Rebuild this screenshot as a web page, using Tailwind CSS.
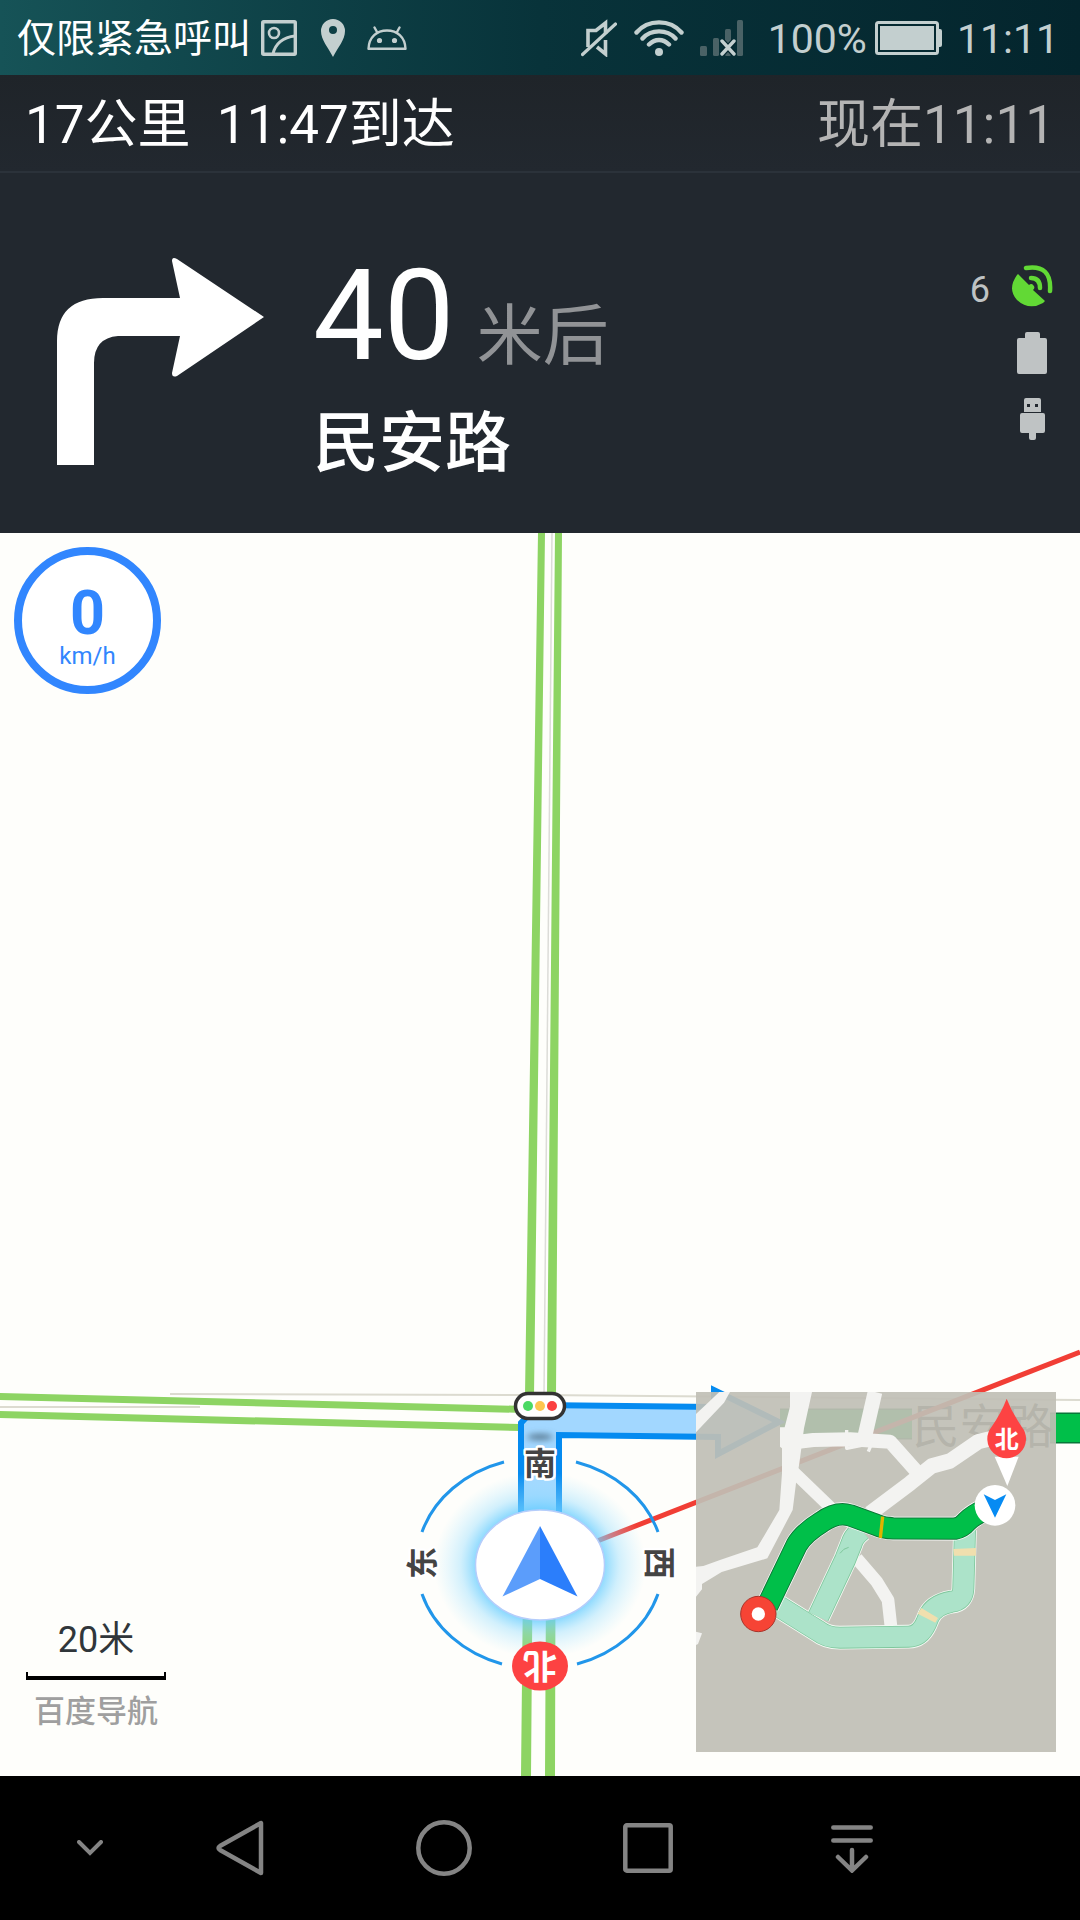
<!DOCTYPE html>
<html lang="zh-CN">
<head>
<meta charset="utf-8">
<meta name="viewport" content="width=device-width, initial-scale=1">
<title>导航</title>
<script src="https://cdn.jsdelivr.net/npm/@tailwindcss/browser@4"></script>
</head>
<body class="flex min-h-screen flex-col bg-black font-['Roboto','Noto_Sans_CJK_SC',sans-serif]">

<!-- System status bar -->
<div class="flex h-[75px] shrink-0 items-center justify-between bg-linear-to-r from-[#165357] via-[#08333a] to-[#04252d] pr-[21px] pl-[17px] text-[#c3cfcf]">
  <div class="flex items-center">
    <span class="pt-1 text-[39px] leading-none text-white">仅限紧急呼叫</span>
    <svg class="ml-2.5 h-9 w-9" viewBox="0 0 36 36" fill="none" stroke="currentColor" stroke-width="3.4" aria-hidden="true"><rect x="1.7" y="1.7" width="32.6" height="32.6" rx="1"/><circle cx="13" cy="13" r="5" stroke-width="2.6"/><path d="M12 34C14 24 22 17 34 16" stroke-width="3"/></svg>
    <svg class="ml-6 h-[38px] w-6" viewBox="0 0 24 38" fill="currentColor" aria-hidden="true"><path fill-rule="evenodd" d="M12 0a12 12 0 0 1 12 12c0 9-7 16-12 26C7 28 0 21 0 12A12 12 0 0 1 12 0zm0 7a4 4 0 1 0 0 8 4 4 0 0 0 0-8z"/></svg>
    <svg class="ml-[22px] h-6 w-10" viewBox="0 0 40 24" fill="none" stroke="currentColor" stroke-width="2.4" stroke-linecap="round" stroke-linejoin="round" aria-hidden="true"><path d="M1.5 22.8C2 11 10 4.5 20 4.5S38 11 38.5 22.8z"/><path d="M10 6L7.5 1.5M30 6l2.500-4.500"/><circle cx="12.500" cy="14.500" r="1.400" fill="currentColor"/><circle cx="27.500" cy="14.500" r="1.400" fill="currentColor"/></svg>
  </div>
  <div class="flex items-center">
    <svg class="h-[38px] w-9" viewBox="0 0 36 38" fill="none" stroke="currentColor" stroke-width="3.600" aria-hidden="true"><path d="M7 28V11.500h8L24.500 4V15M16 28l8.500 7V21"/><path d="M1.500 35.500L34.500 5" stroke-width="3.200" stroke-linecap="round"/></svg>
    <svg class="ml-[17px] h-9 w-[50px]" viewBox="0 0 50 36" fill="none" stroke="currentColor" stroke-width="4.400" stroke-linecap="round" aria-hidden="true"><path d="M2.500 12.500C14-1 36-1 47.500 12.500M8.500 18.500C17 9 33 9 41.500 18.500M15 24.500c6-6 14-6 20 0"/><circle cx="25" cy="32" r="4" fill="currentColor" stroke="none"/></svg>
    <svg class="ml-4 h-9 w-11" viewBox="0 0 44 36" aria-hidden="true"><g fill="#4a6266"><rect y="26" width="7" height="10" rx="1.500"/><rect x="13" y="18" width="6" height="18" rx="1.500"/><rect x="25" y="9" width="6" height="27" rx="1.500"/><rect x="37" width="6" height="36" rx="1.500"/></g><path d="M22 21l12 13M34 21L22 34" stroke="#04252d" stroke-width="6"/><path d="M22 21l12 13M34 21L22 34" stroke="currentColor" stroke-width="3.400" stroke-linecap="round"/></svg>
    <span class="ml-6 pt-1 text-[41px] leading-none">100%</span>
    <svg class="ml-2 h-[34px] w-[68px]" viewBox="0 0 68 34" aria-hidden="true"><rect x="1.500" y="1.500" width="61" height="31" rx="2" fill="none" stroke="currentColor" stroke-width="3"/><rect x="5" y="5" width="54" height="24" fill="currentColor"/><path d="M63 8h2q2 0 2 2v14q0 2-2 2h-2z" fill="currentColor"/></svg>
    <span class="ml-[14px] pt-1 text-[41px] leading-none">11:11</span>
  </div>
</div>

<!-- Trip summary -->
<header class="shrink-0 bg-[#22282f]">
  <div class="flex h-[98px] items-center justify-between border-b-2 border-[#2b323a] bg-linear-to-b from-[#1f2429] to-[#22282f] px-[25px] pt-1 text-[53px] leading-none">
    <p class="whitespace-pre text-white">17公里  11:47到达</p>
    <p class="text-[#b4b4b4]">现在11:11</p>
  </div>

  <!-- Next manoeuvre -->
  <div class="flex h-[360px] justify-between pr-[26px] pl-14">
    <div class="flex">
      <svg class="mt-[84px] h-[209px] w-[209px]" viewBox="0 0 209 209" fill="#fff" role="img" aria-label="右转"><path d="M1 208V84Q1 41 47 41H124L116 4Q116-1 121 2L208 60L121 119Q116 121 116 116L124 79H62Q38 81 38 106V208z"/></svg>
      <div class="ml-12 pt-20 text-white">
        <p class="flex items-baseline gap-[22px] leading-[126px]"><span class="text-[126px]">40</span><span class="text-[66px] text-[#919396]">米后</span></p>
        <p class="mt-1 text-[66px] leading-[80px] font-medium">民安路</p>
      </div>
    </div>
    <div class="flex flex-col items-end pt-[91px] text-[#bfc3c4]">
      <div class="flex items-center gap-5">
        <span class="pt-2 text-[36px] leading-[36px]">6</span>
        <svg class="h-[44px] w-[44px]" viewBox="0 0 44 44" fill="none" stroke="#62d935" stroke-linecap="round" aria-label="卫星信号" role="img"><path d="M7 11Q-3 25 7 36Q19 47 33 39L35 37L23 26A3 3 0 1 0 19 21L8 10z" fill="#62d935" stroke="none"/><path d="M21 14Q30 14 30 24" stroke-width="4.500"/><path d="M16 4Q42 0 40 27" stroke-width="4.500"/></svg>
      </div>
      <svg class="mt-6 mr-[6px] h-[42px] w-[31px]" viewBox="0 0 31 42" fill="currentColor" aria-label="电池" role="img"><path d="M8 6V2q0-2 2-2h11q2 0 2 2v4h5q2 0 2 2v32q0 2-2 2H2q-2 0-2-2V8q0-2 2-2z"/></svg>
      <svg class="mt-6 mr-2 h-[42px] w-[26px]" viewBox="0 0 26 42" fill="currentColor" aria-label="USB" role="img"><path fill-rule="evenodd" d="M4 14V2q0-2 2-2h13q2 0 2 2v12zM7 6v3h3V6zm8 0v3h3V6z"/><path d="M2 15h21q2 0 2 2v16q0 2-2 2h-7v5q0 2-2 2h-3q-2 0-2-2v-5H2q-2 0-2-2V17q0-2 2-2z"/></svg>
    </div>
  </div>
</header>

<!-- Map -->
<main class="relative flex min-h-[900px] flex-1 flex-col justify-between overflow-hidden bg-[#fefefb]">
  <svg class="absolute inset-0 h-full w-full" viewBox="0 533 1080 1243" preserveAspectRatio="xMidYMax slice" role="img" aria-label="地图">
    <defs>
      <radialGradient id="glow"><stop offset=".55" stop-color="#5cc9ff" stop-opacity=".9"/><stop offset=".75" stop-color="#8fdbff" stop-opacity=".4"/><stop offset="1" stop-color="#b0e8ff" stop-opacity="0"/></radialGradient>
      <filter id="soft" x="-50%" y="-200%" width="200%" height="500%"><feGaussianBlur stdDeviation="3"/></filter>
    </defs>
    <!-- side roads -->
    <path d="M170 1394L540 1395L1080 1400" fill="none" stroke="#dcdbd0" stroke-width="2"/>
    <path d="M0 1407H200" stroke="#dcdbd0" stroke-width="2"/>
    <path d="M552 533L544 1395" stroke="#dcdcd8" stroke-width="1.500"/>
    <g fill="#8dd463">
      <path d="M538 533H545L534 1395L531 1776H521L525 1395z"/>
      <path d="M555 533H562L556 1395L555 1776H545L547 1395z"/>
      <path d="M0 1393L525 1406V1413L0 1400z"/>
      <path d="M0 1411L520 1424V1431L0 1418z"/>
    </g>
    <!-- route ahead -->
    <path d="M780 1424H912M1050 1428H1080" stroke="#08783a" stroke-width="31"/>
    <path d="M780 1424H912M1050 1428H1080" stroke="#00bf49" stroke-width="28"/>
    <path d="M521 1565V1423L538 1405L714 1407V1390L779 1422L718 1454V1437L559 1435V1565z" fill="#a2d7ff" stroke="#058bf0" stroke-width="6"/>
    <ellipse cx="540" cy="1437" rx="13" ry="3" fill="#55758c" filter="url(#soft)"/>
    <text x="983" y="1443" text-anchor="middle" font-size="47" fill="#333">民安路</text>
    <path d="M541 1563L1080 1352" stroke="#f13e35" stroke-width="5"/>
    <!-- traffic light -->
    <rect x="515.500" y="1393.500" width="49" height="25" rx="12.500" fill="#fff" stroke="#333" stroke-width="3.500"/>
    <circle cx="528" cy="1406" r="5" fill="#4bd964"/><circle cx="540" cy="1406" r="5" fill="#fec64f"/><circle cx="552" cy="1406" r="5" fill="#fb4141"/>
    <!-- compass -->
    <ellipse cx="540" cy="1565" rx="106" ry="93" fill="url(#glow)"/>
    <g fill="none" stroke="#2196ea" stroke-width="3">
      <path d="M422 1532A123.400 105.600 0 0 1 504 1462"/>
      <path d="M576 1462A123.400 105.600 0 0 1 658 1532"/>
      <path d="M422 1594A123.400 105.600 0 0 0 502 1664"/>
      <path d="M658 1594A123.400 105.600 0 0 1 577 1664"/>
    </g>
    <ellipse cx="540" cy="1565" rx="64.500" ry="55" fill="#fff" stroke="#b5cdfb" stroke-width="1.500"/>
    <path d="M540 1526V1579L502.500 1596.500z" fill="#5b9dfb"/><path d="M540 1526V1579L577.500 1596.500z" fill="#2b7efb"/>
    <ellipse cx="540" cy="1666" rx="28" ry="24.500" fill="#fd4242"/>
    <g text-anchor="middle" font-size="32" font-weight="700" fill="#444" stroke="#fff" stroke-width="5" stroke-linejoin="round" paint-order="stroke">
      <text x="540" y="1475">南</text>
      <text transform="translate(434 1563) rotate(-90)">东</text>
      <text transform="translate(648 1563) rotate(90)">西</text>
    </g>
    <text transform="translate(540 1654) rotate(180)" text-anchor="middle" font-size="34" font-weight="700" fill="#fff">北</text>
  </svg>

  <!-- Current speed -->
  <div class="relative mt-[14px] ml-[14px] flex size-[147px] flex-col items-center rounded-full border-8 border-[#3186fe] bg-white pt-[27px] text-[#3186fe]">
    <span class="text-[61px] leading-[62px] font-bold">0</span>
    <span class="text-[24px] leading-[24px]">km/h</span>
  </div>

  <div class="relative flex items-end justify-between pr-6 pb-6 pl-[26px]">
    <!-- Scale -->
    <div class="mb-[22px] flex w-[140px] flex-col items-center">
      <span class="text-[36px] leading-[44px] text-[#30363a]">20米</span>
      <div class="mt-[10px] h-2 w-full border-x-2 border-b-4 border-black"></div>
      <span class="mt-[14px] text-[31px] leading-[36px] font-medium text-[#9f9f9f]">百度导航</span>
    </div>

    <!-- Route overview -->
    <svg class="size-[360px]" viewBox="48 156 1080 1080" role="img" aria-label="路线全览">
      <path d="M48 156H1128V1236H48z" fill="#c0bfb5" fill-opacity=".92"/>
      <g fill="#f3f3f1">
        <path d="M48 222L118 156H150L132 188L48 277z"/>
        <path d="M330 156H396L372 265L358 370L348 430L338 510L262 655L125 696L66 732V748L48 770V680L70 678L120 660L232 622L298 510L306 400L306 325L300 320V262H314L330 200z"/>
        <path d="M48 875L66 880L54 912L48 915z"/>
      </g>
      <g fill="none" stroke="#f3f3f1" stroke-linejoin="round">
        <path d="M350 306L400 300L510 298L630 305L715 400" stroke-width="42"/>
        <path d="M585 156L552 300" stroke-width="44"/>
        <path d="M500 270L500 325L575 310L565 335" stroke-width="10"/>
        <path d="M340 395L470 520" stroke-width="36"/>
        <path d="M935 295L895 305L810 363L755 378L690 430L570 520" stroke-width="46"/>
        <path d="M530 655L590 725L624 780L634 870" stroke-width="38"/>
      </g>
      <g fill="none" stroke-linejoin="round">
        <g stroke="#f4faf5" stroke-width="71"><path id="alt" d="M290 795L415 873Q440 893 480 893L685 890Q720 890 738 850L745 833Q760 795 815 785Q848 782 850 745L855 570"/><path id="link" d="M415 830L495 660L515 610Q520 590 545 570"/></g>
        <g stroke="#7fc79c" stroke-width="66"><use href="#alt"/><use href="#link"/></g>
        <g stroke="#ace3c9" stroke-width="61"><use href="#alt"/><use href="#link"/></g>
      </g>
      <path d="M480 640Q490 625 506 622" fill="none" stroke="#7fc79c" stroke-width="3"/>
      <path d="M820 627L888 624V647H822zM724 804L774 834L766 848L713 821z" fill="#f0dfae"/>
      <g fill="none" stroke-linejoin="round">
        <path d="M262 798L350 615Q370 580 425 546Q470 514 510 526L590 555Q610 564 640 565L825 566Q845 563 860 545Q880 525 910 512" stroke="#fff" stroke-width="71"/>
        <path d="M262 798L350 615Q370 580 425 546Q470 514 510 526L590 555Q610 564 640 565L825 566Q845 563 860 545Q880 525 910 512" stroke="#0f7838" stroke-width="67"/>
        <path d="M262 798L350 615Q370 580 425 546Q470 514 510 526L590 555Q610 564 640 565L825 566Q845 563 860 545Q880 525 910 512" stroke="#00bf49" stroke-width="61"/>
      </g>
      <path d="M608 530L601 594" stroke="#dfb300" stroke-width="10"/>
      <circle cx="235" cy="822" r="53" fill="#f64435" stroke="#a8332a" stroke-width="3"/><circle cx="235" cy="822" r="20" fill="#fff"/>
      <path d="M944 350H1016L982 438z" fill="#fff"/>
      <path d="M980 176Q996 218 1025 260A58 58 0 1 1 935 260Q964 218 980 176z" fill="#fd4343"/>
      <text x="980" y="325" text-anchor="middle" font-size="72" font-weight="700" fill="#fff">北</text>
      <circle cx="945" cy="496" r="61" fill="#fff"/><path d="M911 463L945 480L979 463L945 533z" fill="#068bf3"/>
    </svg>
  </div>
</main>

<!-- System navigation bar -->
<nav class="flex h-36 shrink-0 items-center bg-black pr-[126px] pl-[42px] text-[#848484]">
  <button type="button" aria-label="隐藏导航栏" class="flex h-full w-24 items-center justify-center"><svg class="h-4 w-[26px]" viewBox="0 0 26 16" fill="none" stroke="currentColor" stroke-width="4" stroke-linecap="round"><path d="M2 2l11 11L24 2"/></svg></button>
  <button type="button" aria-label="返回" class="flex h-full flex-1 items-center justify-center"><svg class="h-[56px] w-12" viewBox="0 0 48 56" fill="none" stroke="currentColor" stroke-width="4.500" stroke-linejoin="round"><path d="M45 3V53L4 30Q1 28 4 26z"/></svg></button>
  <button type="button" aria-label="主屏幕" class="flex h-full flex-1 items-center justify-center"><svg class="size-14" viewBox="0 0 56 56" fill="none" stroke="currentColor" stroke-width="4.500"><circle cx="28" cy="28" r="25.700"/></svg></button>
  <button type="button" aria-label="最近任务" class="flex h-full flex-1 items-center justify-center"><svg class="size-[50px]" viewBox="0 0 50 50" fill="none" stroke="currentColor" stroke-width="4.500"><rect x="2.300" y="2.300" width="45.400" height="45.400" rx="1.500"/></svg></button>
  <button type="button" aria-label="下拉通知" class="flex h-full flex-1 items-center justify-center"><svg class="h-[50px] w-[42px]" viewBox="0 0 42 50" fill="none" stroke="currentColor" stroke-width="4.500" stroke-linecap="round"><path d="M2.300 4.500H39.700M2.300 17.500H39.700M21 27V47M7 34l14 13.500L35 34"/></svg></button>
</nav>
</body>
</html>
